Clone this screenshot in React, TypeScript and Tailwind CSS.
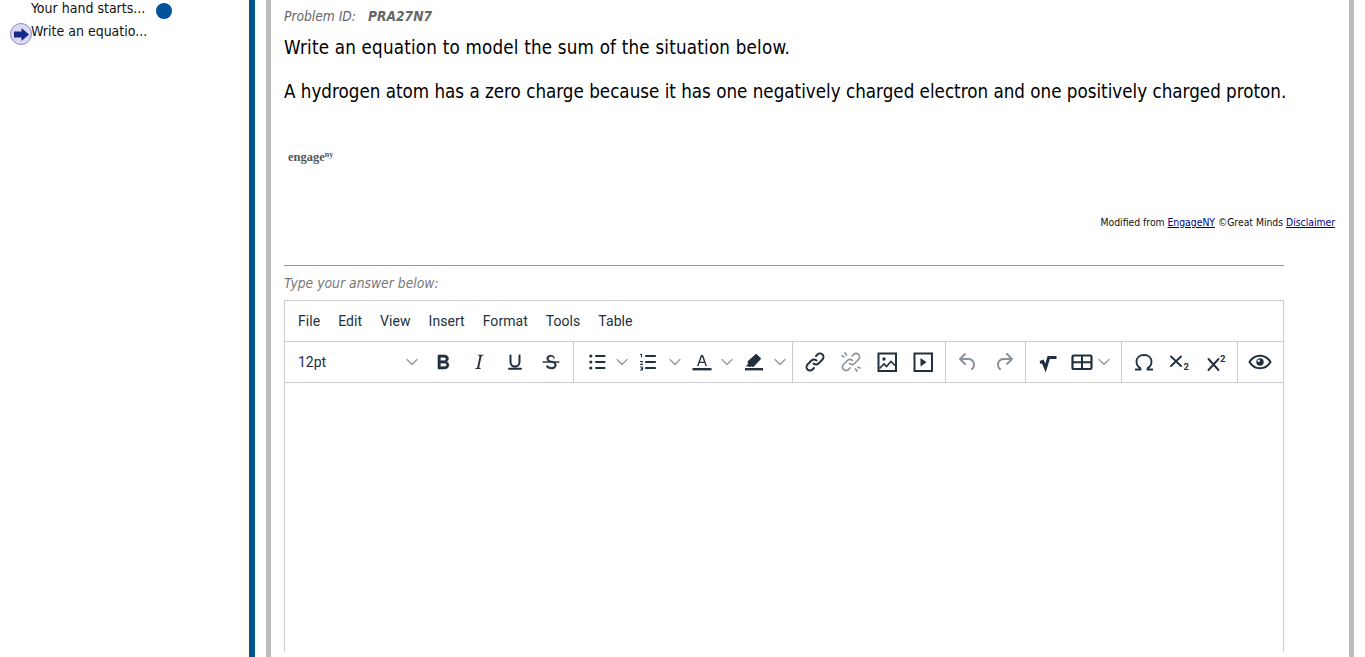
import { ChevronDown } from 'lucide-react';

const dark = '#222f3e';
const muted = '#8a929b';

function Btn({ children, w = 'w-[36px]' }: { children: React.ReactNode; w?: string }) {
  return <div className={`flex items-center justify-center h-[34px] shrink-0 ${w}`}>{children}</div>;
}

function Chev({ w = 'w-[12px]' }: { w?: string }) {
  return (
    <div className={`flex items-center justify-center shrink-0 ${w}`}>
      <ChevronDown size={20} strokeWidth={1.3} className="shrink-0 text-[#8a929b]" />
    </div>
  );
}

function Icon({ children, fill = dark }: { children: React.ReactNode; fill?: string }) {
  return (
    <svg width="24" height="24" viewBox="0 0 24 24" fill={fill} className="shrink-0">
      {children}
    </svg>
  );
}

function Group({ children, last = false, pr = 'pr-[4px]' }: { children: React.ReactNode; last?: boolean; pr?: string }) {
  return (
    <div className={`flex items-center h-full pl-[4px] ${pr} ${last ? '' : 'border-r border-[#ccc]'}`}>{children}</div>
  );
}

export default function App() {
  return (
    <div className="flex h-[657px] overflow-hidden bg-white font-['DejaVu_Sans_Condensed','DejaVu_Sans',sans-serif]">
      <aside className="w-[249px] shrink-0 text-[14px] text-[#111] leading-[23px] border-r-2 border-[#fbfde8]">
        <div className="pl-[31px] -mt-[3px] h-[23px] flex items-center">
          <span>Your hand starts...</span>
          <span className="ml-[11px] mt-[4px] w-[16px] h-[16px] rounded-full bg-[#00529b]" />
        </div>
        <div className="relative pl-[31px] h-[23px] flex items-center">
          <span className="absolute left-[10px] top-[3px] w-[22px] h-[22px] rounded-full bg-[#dcd9f5] border border-[#8d86c9] flex items-center justify-center">
            <svg width="17" height="15" viewBox="0 0 17 15">
              <path d="M1 4.500h7.500V1l7.500 6.500L8.500 14v-3.500H1z" fill="#14288c" />
            </svg>
          </span>
          <span>Write an equatio...</span>
        </div>
      </aside>

      <div className="w-[6px] shrink-0 bg-[#00538f]" />
      <div className="w-[11px] shrink-0" />
      <div className="w-[5px] shrink-0 bg-[#bcbcbc]" />

      <main className="w-[1078px] shrink-0 pl-[13px] pr-[14px]">
        <div className="italic text-[#666] text-[13.7px] h-[20px] mt-[6px] flex items-center">
          <span>Problem ID:</span>
          <span className="ml-[12px] font-bold">PRA27N7</span>
        </div>
        <p className="mt-[11px] text-[18.65px] tracking-[0.2px] leading-[22px] text-black">Write an equation to model the sum of the situation below.</p>
        <p className="mt-[22px] text-[18.65px] leading-[22px] text-black whitespace-nowrap">
          A hydrogen atom has a zero charge because it has one negatively charged electron and one positively charged proton.
        </p>
        <div className="mt-[45px] pl-[4px] h-[20px] font-['Liberation_Serif',serif] font-bold text-[12.5px] text-[#555]">
          engage<sup className="text-[8px]">ny</sup>
        </div>
        <div className="mt-[46px] text-[10.3px] leading-[16px] text-right text-[#111]">
          Modified from <a className="underline text-[#00008b]">EngageNY</a> ©Great Minds{' '}
          <a className="underline text-[#00008b]">Disclaimer</a>
        </div>
        <div className="mt-[35px] w-[1000px] border-t border-[#999]" />
        <div className="mt-[7px] italic text-[13.8px] leading-[20px] text-[#777]">Type your answer below:</div>

        <div className="mt-[7px] w-[1000px] h-[352px] border border-b-0 border-[#ccc] font-['Roboto',sans-serif] text-[#222f3e]">
          <div className="flex items-center h-[41px] px-[4px] text-[14px] tracking-[0.05px] border-b border-[#ccc]">
            {['File', 'Edit', 'View', 'Insert', 'Format', 'Tools', 'Table'].map((m) => (
              <span key={m} className="px-[9px]">{m}</span>
            ))}
          </div>
          <div className="flex items-center h-[41px] border-b border-[#ccc]">
            <Group>
              <div className="flex items-center justify-between w-[136px] pl-[9px] pr-[3px] text-[14px]">
                <span>12pt</span>
                <ChevronDown size={20} strokeWidth={1.3} className="text-[#8a929b]" />
              </div>
              <Btn><Icon><path stroke={dark} strokeWidth="0.6" d="M7.800 19c-.3 0-.5 0-.6-.2l-.2-.5V5.700c0-.2 0-.4.2-.5l.6-.2h5c1.500 0 2.700.3 3.500 1 .7.6 1.100 1.400 1.100 2.500a3 3 0 01-.6 1.900c-.4.6-1 1-1.600 1.200.4.1.9.3 1.300.6s.8.7 1 1.100c.2.500.3 1 .3 1.600 0 1.300-.4 2.300-1.300 3-.8.7-2.100 1.100-3.800 1.100H7.800zm5-8.300c.6 0 1.200-.1 1.600-.5.400-.3.600-.7.600-1.300 0-1.100-.8-1.700-2.300-1.700H9.300v3.500h3.400zm.5 6c.7 0 1.300-.1 1.700-.4.400-.4.600-.9.600-1.500s-.2-1-.6-1.300c-.4-.3-1-.4-1.700-.4H9.300v3.600h4z" /></Icon></Btn>
              <Btn><Icon><path d="M16.700 4.700l-.1.900h-.3c-.6 0-1 0-1.400.3-.3.300-.4.600-.5 1.100l-2.100 9.800v.600c0 .5.400.8 1.400.8h.2l-.2.800H8l.2-.8h.2c1.100 0 1.800-.5 2-1.500l2-9.800.1-.5c0-.6-.4-.8-1.400-.8h-.3l.2-.9h5.800z" /></Icon></Btn>
              <Btn><Icon fill="none"><path d="M7.500 5.500v6.500a4.500 4.500 0 009 0V5.500M6 18.800h12" stroke={dark} strokeWidth="2" strokeLinecap="round" /></Icon></Btn>
              <Btn><Icon><path stroke={dark} strokeWidth="0.4" d="M15.600 8.500c-.5-.7-1-1.100-1.300-1.300-.6-.4-1.300-.6-2-.6-2.700 0-2.800 1.700-2.800 2.100 0 1.600 1.800 2 3.200 2.300 4.400.9 4.600 2.800 4.600 3.900 0 1.400-.7 4.100-5 4.100A6.200 6.200 0 017 16.400l1.500-1.100c.4.600 1.600 2 3.700 2 1.600 0 2.500-.4 3-1 .3-.5.300-1.200.3-1.400 0-.8-.3-2-2.800-2.400-2-.4-5-1.100-5-4 0-2 1.500-3.400 3.900-3.400 2 0 3.300 1 3.900 2.100l-1.400.7z" /><path d="M3.500 11.300h17v1.400h-17z" /></Icon></Btn>
            </Group>
            <Group pr="pr-[8px]">
              <Btn w="w-[38px]"><Icon><path d="M11 5h8.500c.6 0 1 .4 1 1s-.4 1-1 1H11a1 1 0 010-2zm0 6h8.500c.6 0 1 .4 1 1s-.4 1-1 1H11a1 1 0 010-2zm0 6h8.500c.6 0 1 .4 1 1s-.4 1-1 1H11a1 1 0 010-2z" /><circle cx="5.800" cy="6" r="1.600" /><circle cx="5.800" cy="12" r="1.600" /><circle cx="5.800" cy="18" r="1.600" /></Icon></Btn>
              <Chev />
              <Btn w="w-[40px]"><Icon><path d="M10 17h9c.6 0 1 .4 1 1s-.4 1-1 1h-9a1 1 0 010-2zm0-6h9c.6 0 1 .4 1 1s-.4 1-1 1h-9a1 1 0 010-2zm0-6h9c.6 0 1 .4 1 1s-.4 1-1 1h-9a1 1 0 110-2zM6 4v3.500H5V5H4V4h2zm1 7.500V12l-2 2h2v1H4v-.5L6 12.200V12H4v-1h2.500c.3 0 .5.200.5.500zM7 17v3c0 .3-.2.500-.5.500H4v-1h2v-.5H5v-1h1V17.500H4v-1h2.500c.3 0 .5.200.5.500z" /></Icon></Btn>
              <Chev w="w-[14px]" />
              <Btn w="w-[40px]"><Icon><path d="M2.500 18h19v2.400h-19z" /><path d="M8.500 16H7l4-11h2l4 11h-1.500l-1-3h-5l-1 3zm1.500-4.300h4L12 6.500l-2 5.200z" /></Icon></Btn>
              <Chev w="w-[10px]" />
              <Btn w="w-[44px]"><Icon><path d="M3 18h18v2.400H3z" /><path d="M7 16.500H4l2.200-3.300-.5-.6c-.4-.4-.4-1 0-1.400l7.800-7c.4-.3 1-.3 1.300 0l3.900 3.700c.4.400.4 1 0 1.400l-7 7.500c-.4.400-1 .4-1.400 0l-.5-.5-1.300.800H7z" /></Icon></Btn>
              <Chev w="w-[8px]" />
            </Group>
            <Group>
              <Btn><Icon fill="none"><g stroke={dark} strokeWidth="1.900" strokeLinecap="round"><path d="M10.500 13.500a3.500 3.500 0 005 0l4-4a3.500 3.500 0 00-5-5l-1.500 1.500" /><path d="M13.500 10.500a3.500 3.500 0 00-5 0l-4 4a3.500 3.500 0 005 5l1.500-1.500" /></g></Icon></Btn>
              <Btn><Icon fill="none"><g stroke={muted} strokeWidth="1.700" strokeLinecap="round"><path d="M10.500 13.500a3.500 3.500 0 005 0l4-4a3.500 3.500 0 00-5-5l-1.500 1.500" /><path d="M13.500 10.500a3.500 3.500 0 00-5 0l-4 4a3.500 3.500 0 005 5l1.500-1.500" /><path d="M6 3l1.500 2M3 6l2 .8M18 21l-1.500-2M21 18l-2-.8" /></g></Icon></Btn>
              <Btn><Icon fill="none"><rect x="3.500" y="3.500" width="17.500" height="17.500" stroke={dark} strokeWidth="2" /><circle cx="9" cy="9" r="1.700" fill={dark} /><path d="M4.500 18.500l4.500-4.500 2.500 2.500 4.500-5 4 4" stroke={dark} strokeWidth="1.600" /></Icon></Btn>
              <Btn><Icon fill="none"><rect x="3.500" y="3.500" width="17.500" height="17.500" stroke={dark} strokeWidth="2" /><path d="M9.500 8l6 4.200-6 4.200z" fill={dark} /></Icon></Btn>
            </Group>
            <Group pr="pr-[3px]">
              <Btn><Icon fill={muted}><path d="M6.400 8H12c3.700 0 6.200 2 6.800 5.100.6 2.700-.4 5.600-2.300 6.800a1 1 0 01-1-1.800c1.100-.7 1.800-2.700 1.400-4.600C16.400 11.200 14.600 10 12 10H6.400l3.300 3.300a1 1 0 11-1.400 1.400l-5-5a1 1 0 010-1.400l5-5a1 1 0 011.400 1.400L6.400 8z" /></Icon></Btn>
              <Btn><Icon fill={muted}><path d="M17.600 10H12c-2.800 0-4.400 1.400-4.900 3.500-.4 2 .3 4 1.400 4.600a1 1 0 11-1 1.800c-2-1.200-2.900-4.100-2.300-6.800.6-3 3-5.100 6.800-5.100h5.600l-3.300-3.300a1 1 0 111.400-1.400l5 5a1 1 0 010 1.400l-5 5a1 1 0 01-1.400-1.400l3.300-3.300z" /></Icon></Btn>
            </Group>
            <Group pr="pr-[11px]">
              <Btn><Icon fill="none"><path d="M4 12.500l2.800-1 2.700 6.500 3.200-10.500h7.800" stroke={dark} strokeWidth="3" /></Icon></Btn>
              <Btn w="w-[32px]"><Icon fill="none"><rect x="2.500" y="5.500" width="19" height="13.500" rx="1.200" stroke={dark} strokeWidth="2.200" /><path d="M3 12.200h18M12 5.500v13.500" stroke={dark} strokeWidth="2" /></Icon></Btn>
              <Chev />
            </Group>
            <Group pr="pr-[3px]">
              <Btn><Icon fill="none"><path d="M3 19.500h5.500v-1.300c-2.500-1.200-4-3.700-4-6.600 0-3.800 3-6.600 7.500-6.600s7.500 2.800 7.500 6.600c0 2.900-1.500 5.400-4 6.600v1.300H21" stroke={dark} strokeWidth="1.800" /></Icon></Btn>
              <Btn><Icon fill="none"><path d="M3 6.500l10 9.500M13 6.500L3 16" stroke={dark} strokeWidth="1.900" strokeLinecap="round" /><text x="15.500" y="20" fontSize="9.500" fontWeight="700" fill={dark} stroke="none">2</text></Icon></Btn>
              <Btn><Icon fill="none"><path d="M4.500 9l10 11M14.500 9l-10 11" stroke={dark} strokeWidth="1.900" strokeLinecap="round" /><text x="16" y="12" fontSize="9.500" fontWeight="700" fill={dark} stroke="none">2</text></Icon></Btn>
            </Group>
            <Group last>
              <Btn><Icon fill="none"><path d="M1.500 12c2.300-3.900 6-6.300 10.500-6.300s8.200 2.400 10.500 6.300c-2.300 3.900-6 6.300-10.500 6.300S3.800 15.900 1.500 12z" stroke={dark} strokeWidth="2" /><circle cx="12" cy="12" r="3.700" fill={dark} /><circle cx="10.700" cy="10.700" r="1.200" fill="#fff" /></Icon></Btn>
            </Group>
          </div>
        </div>
      </main>
      <div className="w-[5px] shrink-0 bg-[#bcbcbc]" />
    </div>
  );
}
